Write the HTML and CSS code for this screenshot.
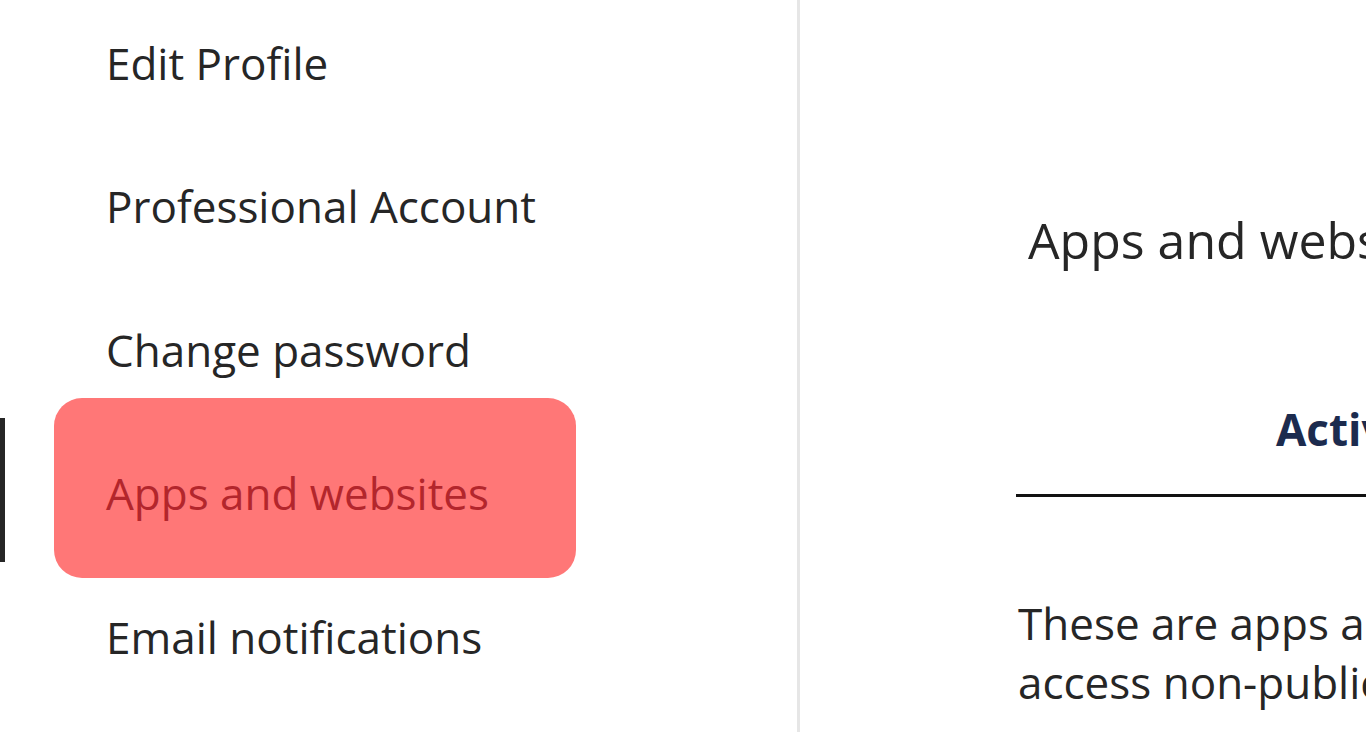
FILE: index.html
```html
<!DOCTYPE html>
<html lang="en">
<head>
<meta charset="utf-8">
<title>Settings</title>
<link rel="stylesheet" href="styles.css">
</head>
<body>
<div class="page">
  <aside class="sidebar">
    <ul class="nav">
      <li class="nav-row"><span class="indicator"></span><a class="nav-link">Edit Profile</a></li>
      <li class="nav-row"><span class="indicator"></span><a class="nav-link">Professional Account</a></li>
      <li class="nav-row"><span class="indicator"></span><a class="nav-link">Change password</a></li>
      <li class="nav-row is-active"><span class="indicator"></span><a class="nav-link">Apps and websites</a></li>
      <li class="nav-row"><span class="indicator"></span><a class="nav-link">Email notifications</a></li>
    </ul>
  </aside>
  <main class="content">
    <h1 class="title">Apps and websites</h1>
    <div class="tabs">
      <div class="tab tab-active">Active</div>
    </div>
    <p class="desc">These are apps and websites you've used Instagram to log into and can<br>access non-public information you chose to share.</p>
  </main>
</div>
</body>
</html>
```

FILE: styles.css
```css
html, body {
  margin: 0;
  padding: 0;
  background: #ffffff;
}
body {
  font-family: "Open Sans", "Noto Sans", sans-serif;
  color: #262626;
  overflow: hidden;
}
.page {
  display: flex;
  width: 1366px;
  height: 732px;
  overflow: hidden;
}
.sidebar {
  flex: 0 0 797px;
  border-right: 3px solid #e6e6e6;
  box-sizing: content-box;
}
.nav {
  list-style: none;
  margin: -9px 0 0 0;
  padding: 0;
}
.nav-row {
  display: flex;
  align-items: center;
  height: 143.5px;
}
.indicator {
  width: 5px;
  height: 144px;
  flex: 0 0 5px;
}
.nav-link {
  display: flex;
  align-items: center;
  box-sizing: border-box;
  margin-left: 49px;
  width: 522px;
  height: 144px;
  padding-left: 52px;
  border-radius: 28px;
  font-size: 44px;
  color: #262626;
  white-space: nowrap;
}
.is-active .indicator {
  background: #262626;
  margin-bottom: 7px;
}
.is-active .nav-link {
  height: 180px;
  padding-top: 10px;
  margin-bottom: 11px;
  background: #ff7777;
  color: #b3262c;
}
.content {
  flex: 1;
  padding-left: 216px;
  white-space: nowrap;
  overflow: hidden;
}
.title {
  margin: 210px 0 0 12px;
  font-weight: 400;
  font-size: 50px;
  line-height: 60px;
  color: #262626;
}
.tabs {
  margin-top: 129px;
  width: 700px;
  border-bottom: 3px solid #111;
  display: flex;
}
.tab {
  padding-left: 260px;
  font-weight: 700;
  font-size: 44px;
  line-height: 60px;
  padding-bottom: 35px;
  color: #1c2b4e;
}
.desc {
  margin: 97px 0 0 2px;
  font-size: 44px;
  line-height: 59px;
  color: #262626;
}
```
